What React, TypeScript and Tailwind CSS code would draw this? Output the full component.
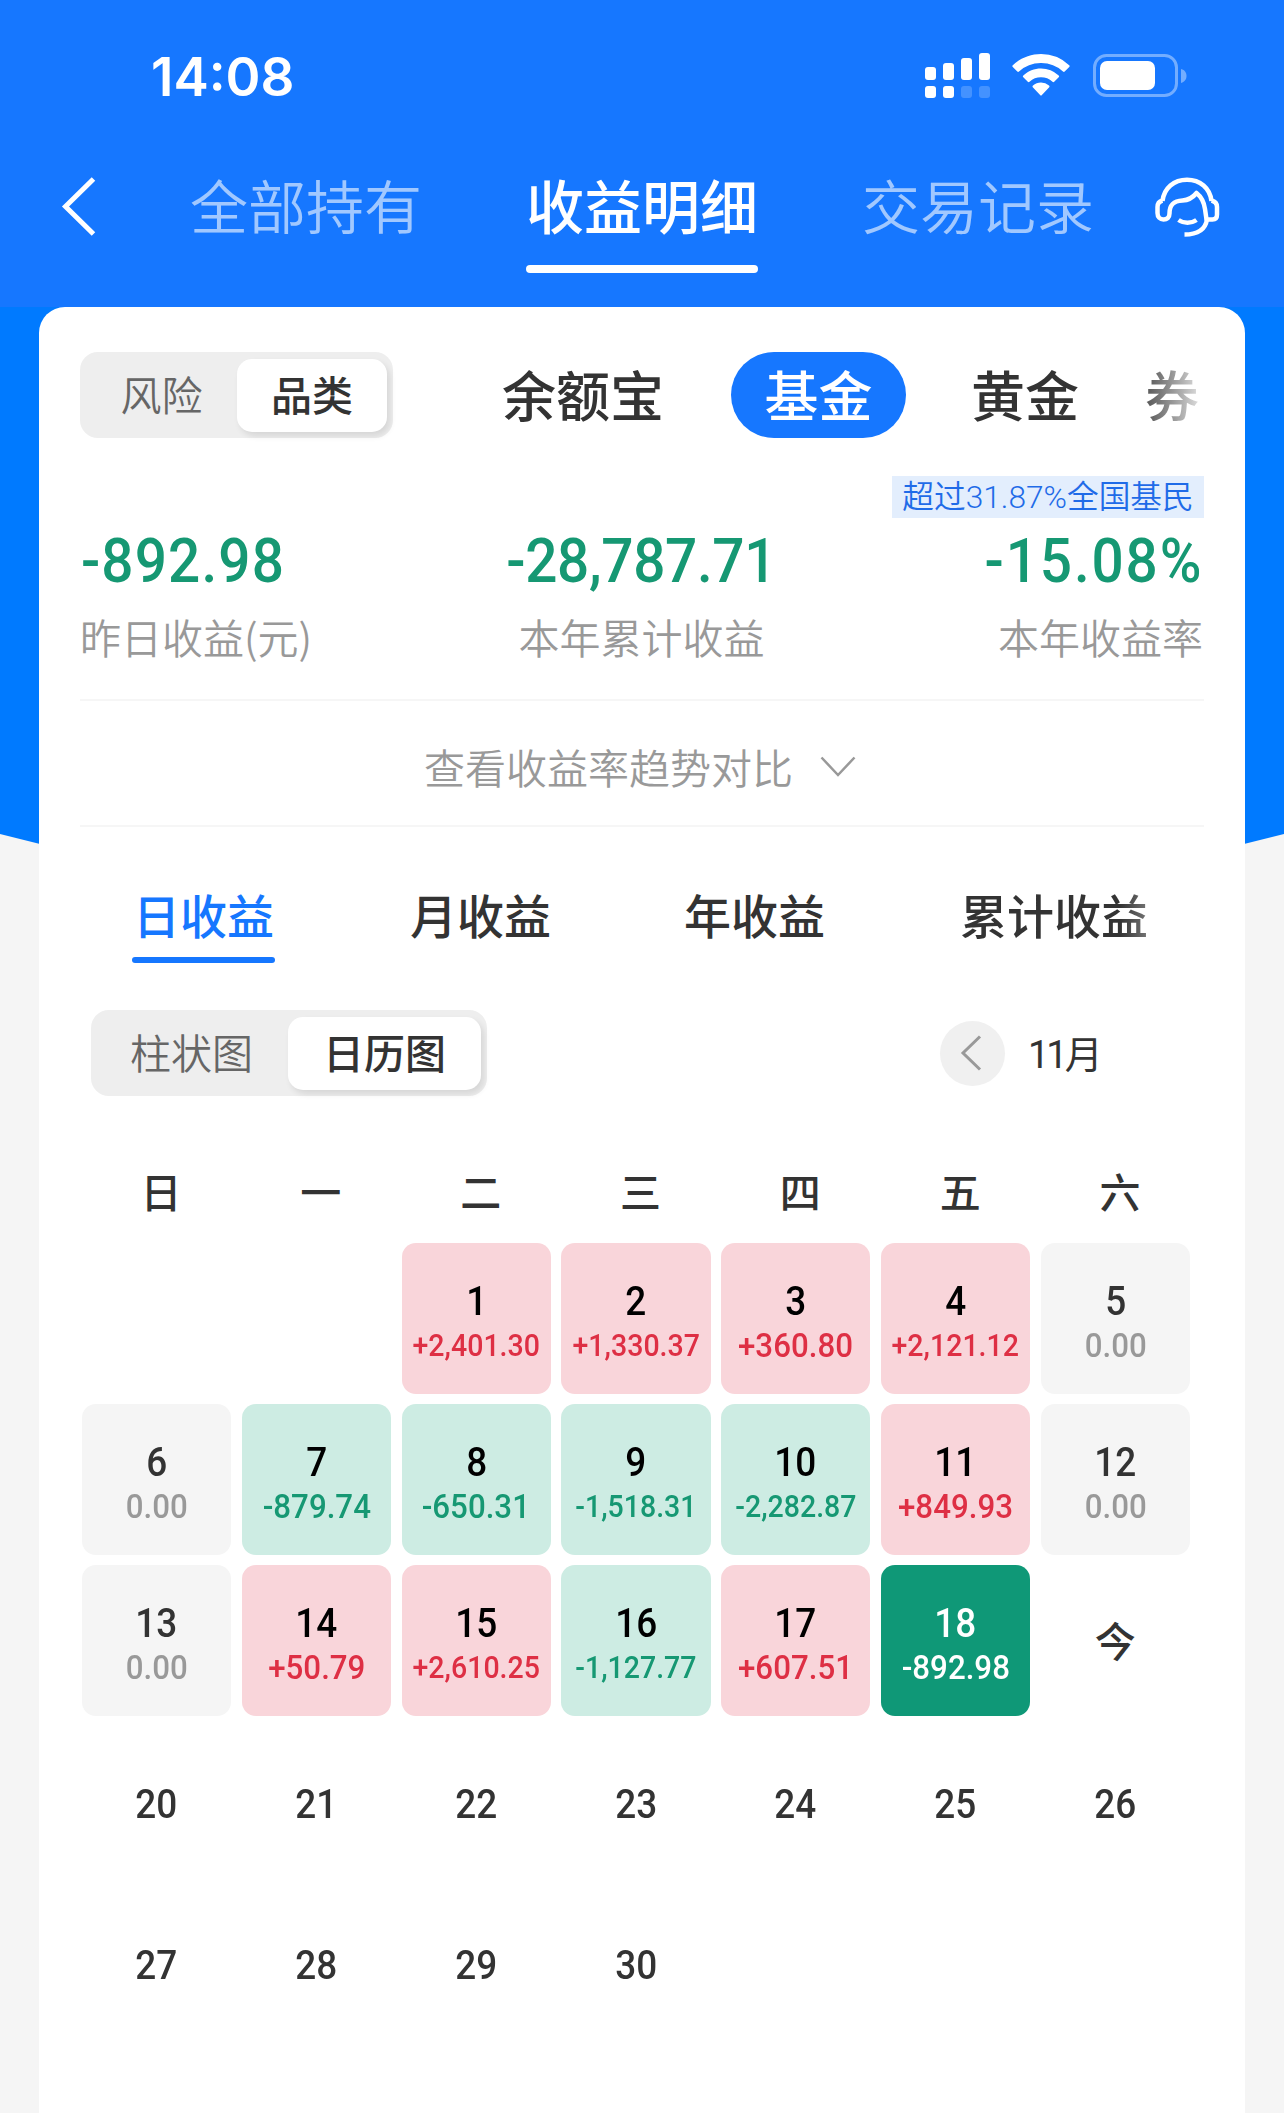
import clsx from 'clsx';

type Tone = 'up' | 'down' | 'flat' | 'selected' | 'none';

interface Day {
  label: string;
  amount?: string;
  tone: Tone;
}

const weekdays = ['日', '一', '二', '三', '四', '五', '六'];

const days: (Day | null)[] = [
  null,
  null,
  { label: '1', amount: '+2,401.30', tone: 'up' },
  { label: '2', amount: '+1,330.37', tone: 'up' },
  { label: '3', amount: '+360.80', tone: 'up' },
  { label: '4', amount: '+2,121.12', tone: 'up' },
  { label: '5', amount: '0.00', tone: 'flat' },
  { label: '6', amount: '0.00', tone: 'flat' },
  { label: '7', amount: '-879.74', tone: 'down' },
  { label: '8', amount: '-650.31', tone: 'down' },
  { label: '9', amount: '-1,518.31', tone: 'down' },
  { label: '10', amount: '-2,282.87', tone: 'down' },
  { label: '11', amount: '+849.93', tone: 'up' },
  { label: '12', amount: '0.00', tone: 'flat' },
  { label: '13', amount: '0.00', tone: 'flat' },
  { label: '14', amount: '+50.79', tone: 'up' },
  { label: '15', amount: '+2,610.25', tone: 'up' },
  { label: '16', amount: '-1,127.77', tone: 'down' },
  { label: '17', amount: '+607.51', tone: 'up' },
  { label: '18', amount: '-892.98', tone: 'selected' },
  { label: '今', tone: 'none' },
  { label: '20', tone: 'none' },
  { label: '21', tone: 'none' },
  { label: '22', tone: 'none' },
  { label: '23', tone: 'none' },
  { label: '24', tone: 'none' },
  { label: '25', tone: 'none' },
  { label: '26', tone: 'none' },
  { label: '27', tone: 'none' },
  { label: '28', tone: 'none' },
  { label: '29', tone: 'none' },
  { label: '30', tone: 'none' },
];

const cellTone: Record<Tone, string> = {
  up: 'bg-[#f9d5da] text-black',
  down: 'bg-[#cdece3] text-black',
  flat: 'bg-[#f5f5f5] text-[#333]',
  selected: 'bg-[#0f9877] text-white',
  none: 'text-[#333]',
};

const amountTone: Record<Tone, string> = {
  up: 'text-[#de2f44]',
  down: 'text-[#169873]',
  flat: 'text-[#999]',
  selected: 'text-white',
  none: '',
};

const StatusBar = () => (
  <div className="flex h-[150px] items-start justify-between pt-[50px] pr-[96px] pl-[151px]">
    <span className="font-['Inter'] text-[53px] leading-[54px] font-semibold">14:08</span>
    <div className="flex items-start pt-[3px]">
      <svg width="65" height="46" viewBox="0 0 65 46" fill="#fff">
        <rect x="0" y="14" width="11" height="13" rx="3" />
        <rect x="18" y="10" width="11" height="17" rx="3" />
        <rect x="36" y="5" width="11" height="22" rx="3" />
        <rect x="54" y="0" width="11" height="27" rx="3" />
        <rect x="0" y="33" width="11" height="12" rx="3" />
        <rect x="18" y="33" width="11" height="12" rx="3" />
        <rect x="36" y="33" width="11" height="12" rx="3" opacity="0.2" />
        <rect x="54" y="33" width="11" height="12" rx="3" opacity="0.2" />
      </svg>
      <svg className="mt-px ml-[22px]" width="58" height="42" viewBox="0 0 58 42" fill="#fff">
        <path d="M29 0C18.500 0 8.500 4 .8 11.200a1.200 1.200 0 0 0 0 1.800L5.300 17.500a1.200 1.200 0 0 0 1.700 0A32 32 0 0 1 29 9a32 32 0 0 1 22 8.500 1.200 1.200 0 0 0 1.700 0L57.200 13a1.200 1.200 0 0 0 0-1.800A41 41 0 0 0 29 0Z" />
        <path d="M29 14.500c-6.600 0-12.900 2.500-17.700 7a1.200 1.200 0 0 0 0 1.800l4.500 4.500a1.200 1.200 0 0 0 1.700 0 17 17 0 0 1 23 0 1.200 1.200 0 0 0 1.700 0l4.500-4.500a1.200 1.200 0 0 0 0-1.800 26 26 0 0 0-17.700-7Z" />
        <path d="M29 28.500c-3 0-5.800 1.100-8 3.100a1.200 1.200 0 0 0 0 1.800l7.100 7.700a1.200 1.200 0 0 0 1.800 0l7.100-7.700a1.200 1.200 0 0 0 0-1.800 12 12 0 0 0-8-3.100Z" />
      </svg>
      <svg className="mt-px ml-[23px]" width="95" height="44" viewBox="0 0 95 44" fill="none">
        <rect x="1.500" y="1.500" width="82" height="40" rx="12" stroke="#fff" strokeOpacity="0.4" strokeWidth="3" />
        <rect x="7" y="7" width="55" height="29" rx="7" fill="#fff" />
        <path d="M88 15c4 1 5.500 4 5.500 7s-1.500 5.500-5.500 7Z" fill="#fff" fillOpacity="0.4" />
      </svg>
    </div>
  </div>
);

const HeadsetIcon = () => (
  <svg width="66" height="62" viewBox="0 0 66 62" fill="none" stroke="#fff" strokeWidth="4.500" strokeLinejoin="round">
    <path d="M7.500 24C9 11 19 2.700 32 2.700S55 11 56.500 24" />
    <path d="M7.500 23.500C4 24.500 2.500 26.500 2.500 30v6c0 4 2.500 6.500 6 6.500s6-2 6-6c0-9 4-12.500 13-13 6-.3 10-2.500 14-7.500 5 4 7.500 9 8.500 16l1.500 10.500h6c3 0 4.500-2 4.500-5V30c0-3.500-1.500-5.500-5.500-6.500" />
    <path d="M52 42.500C50.500 52 43 57.500 29.500 57.500" />
    <path d="M23.500 43c5 3.500 13 3.500 18 0" />
  </svg>
);

const Header = () => (
  <header className="h-[307px] bg-[#1677ff] text-white">
    <StatusBar />
    <nav className="flex items-start pt-[28px] pl-[60px]">
      <svg className="-mt-px" width="36" height="60" viewBox="0 0 36 60" fill="none" stroke="#fff" strokeWidth="5">
        <path d="M33.500 2 5.500 29.500 33.500 57" />
      </svg>
      <div className="-mt-[3px] ml-[94px] flex gap-[104px] text-[58px] leading-[58px]">
        <span className="font-[350] text-white/60">全部持有</span>
        <span className="font-medium">
          收益明细
          <span className="mt-[32px] block h-[8px] rounded-full bg-white" />
        </span>
        <span className="font-[350] text-white/60">交易记录</span>
      </div>
      <div className="-mt-px ml-[61px]">
        <HeadsetIcon />
      </div>
    </nav>
  </header>
);

interface SegmentedProps {
  left: string;
  right: string;
  className: string;
  leftClass: string;
  rightClass: string;
}

const Segmented = ({ left, right, className, leftClass, rightClass }: SegmentedProps) => (
  <div className={clsx('flex h-[86px] items-center rounded-[18px] bg-[#eee] pr-[6px] text-[41px] leading-[41px]', className)}>
    <span className={clsx('pb-[3px] text-center font-[350] text-[#666]', leftClass)}>{left}</span>
    <span
      className={clsx(
        'flex h-[73px] items-center justify-center rounded-[15px] bg-white pb-[3px] font-medium text-[#333] shadow-[3px_4px_6px_rgba(0,0,0,0.1)]',
        rightClass,
      )}
    >
      {right}
    </span>
  </div>
);

const Stats = () => (
  <section>
    <div className="mt-[38px] flex justify-end">
      <span className="flex h-[42px] w-[312px] items-center justify-center bg-[#e3eefd] pt-[2px] font-['Roboto','Noto_Sans_CJK_SC',sans-serif] text-[31.700px] leading-none font-[350] whitespace-nowrap text-[#1f6be8]">
        超过31.87%全国基民
      </span>
    </div>
    <div className="mt-[13px] grid grid-cols-3 pr-px font-['Roboto','Noto_Sans_CJK_SC',sans-serif] text-[61px] leading-[60px] font-medium text-[#169873]">
      <span className="origin-left scale-x-93 pl-px tracking-[1.2px]">-892.98</span>
      <span className="scale-x-93 text-center tracking-[-0.4px]">-28,787.71</span>
      <span className="origin-right scale-x-93 text-right tracking-[2px]">-15.08%</span>
    </div>
    <div className="mt-[25px] grid grid-cols-3 pr-px text-[41px] leading-[41px] font-[350] text-[#999]">
      <span>昨日收益(元)</span>
      <span className="text-center">本年累计收益</span>
      <span className="text-right">本年收益率</span>
    </div>
  </section>
);

const DayCell = ({ day }: { day: Day | null }) => {
  if (!day) return <div />;

  return (
    <div className={clsx('flex flex-col items-center rounded-[14px]', cellTone[day.tone], !day.amount && 'justify-center pt-[6px]')}>
      <span className={clsx('text-[41px] leading-[41px] font-medium', day.label !== '今' && 'scale-x-90', day.amount && 'mt-[38px]')}>
        {day.label}
      </span>
      {day.amount && (
        <span
          className={clsx(
            'scale-x-92 leading-[36px] font-medium whitespace-nowrap',
            day.amount.length > 7 ? 'mt-[6px] text-[31px]' : 'mt-[5px] text-[34px]',
            amountTone[day.tone],
          )}
        >
          {day.amount}
        </span>
      )}
    </div>
  );
};

export default function App() {
  return (
    <div className="h-[2113px] w-[1284px] overflow-hidden bg-[#f5f5f5] font-['Noto_Sans_CJK_SC',sans-serif]">
      <Header />

      <div className="grid h-[1806px]">
        {/* Blue backdrop that tapers behind the card */}
        <div className="col-start-1 row-start-1 h-[560px] bg-[#007aff] [clip-path:polygon(0_0,100%_0,100%_527px,1244px_537px,1000px_560px,284px_560px,40px_537px,0_527px)]" />

        <main className="z-10 col-start-1 row-start-1 mx-[39px] rounded-t-[26px] bg-white px-[41px] pt-[45px]">
          <div className="flex items-center">
            <Segmented left="风险" right="品类" className="w-[313px]" leftClass="w-[157px] pl-[6px]" rightClass="w-[150px]" />
            <div className="ml-[108px] flex flex-1 items-center overflow-hidden text-[54px] leading-none font-medium whitespace-nowrap text-[#333]">
              <span className="-mt-[2px] ml-px">余额宝</span>
              <span className="ml-[67px] flex h-[86px] w-[175px] items-center justify-center rounded-full bg-[#1677ff] pb-[2px] text-white">基金</span>
              <span className="-mt-[2px] ml-[65px]">黄金</span>
              <span className="-mt-[2px] ml-[66px] bg-linear-to-r from-[#555] to-[#ddd] bg-clip-text text-transparent">券</span>
            </div>
          </div>

          <Stats />

          <button className="mt-[42px] flex h-[128px] w-full items-center justify-center gap-[27px] border-y-2 border-[#f6f6f6] pt-[7px] pr-[4px] text-[41px] leading-none font-[350] text-[#999]">
            查看收益率趋势对比
            <svg width="36" height="22" viewBox="0 0 36 22" fill="none" stroke="#999" strokeWidth="2.500">
              <path d="M1.500 1.500 18 19 34.500 1.500" />
            </svg>
          </button>

          <div className="flex gap-[134px] pt-[63px] pl-[52px] text-[47px] leading-[47px] font-medium text-[#333]">
            <span className="w-[143px] text-center text-[#1677ff]">
              日收益
              <span className="mt-[20px] block h-[6px] rounded-full bg-[#1677ff]" />
            </span>
            <span className="-mr-px pl-px">月收益</span>
            <span>年收益</span>
            <span className="h-[60px] bg-linear-to-r from-[#333] from-85% to-[#777] bg-clip-text pl-px text-transparent">累计收益</span>
          </div>

          <div className="mt-[47px] flex items-center pl-[11px]">
            <Segmented left="柱状图" right="日历图" className="w-[396px]" leftClass="w-[197px] pl-[4px]" rightClass="w-[193px]" />
            <div className="ml-[453px] flex size-[65px] items-center justify-center rounded-full bg-[#f0f0f0] pr-[3px]">
              <svg width="22" height="36" viewBox="0 0 22 36" fill="none" stroke="#999" strokeWidth="3">
                <path d="M20 1.500 3 18 20 34.500" />
              </svg>
            </div>
            <span className="ml-[23px] pt-[4px] font-['Roboto','Noto_Sans_CJK_SC',sans-serif] text-[38px] leading-none tracking-[-3px] text-[#333]">11月</span>
          </div>

          <div className="mt-[74px] grid w-[1120px] grid-cols-7 pl-px text-center text-[41px] leading-[41px] font-medium text-[#333]">
            {weekdays.map((name) => (
              <span key={name}>{name}</span>
            ))}
          </div>

          <div className="mt-[32px] ml-[2px] grid w-[1108px] auto-rows-[151px] grid-cols-7 gap-x-[10.500px] gap-y-[10px] font-['Roboto','Noto_Sans_CJK_SC',sans-serif]">
            {days.map((day, i) => (
              <DayCell key={i} day={day} />
            ))}
          </div>
        </main>
      </div>
    </div>
  );
}
